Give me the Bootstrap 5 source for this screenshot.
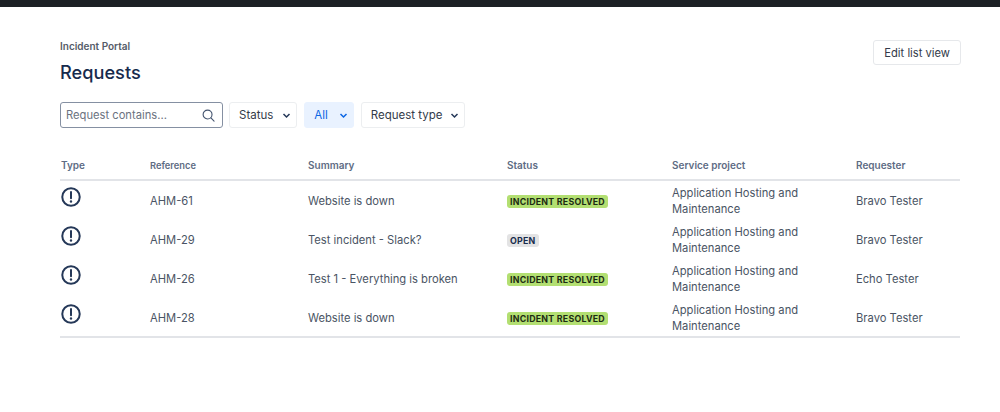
<!DOCTYPE html>
<html lang="en">
<head>
<meta charset="utf-8">
<title>Requests</title>
<link href="https://cdn.jsdelivr.net/npm/bootstrap@5.3.0/dist/css/bootstrap.min.css" rel="stylesheet">
<style>
body{font-family:Inter,"Liberation Sans",sans-serif;background:#fff;color:#4a5464;overflow:hidden;height:412px}
.top-strip{height:7px;background:#1d2125}
.portal-wrap{padding:33px 39px 0 60px}
.crumb{font-size:10px;line-height:13px;font-weight:600;color:#555c68}
.page-title{font-size:18.2px;line-height:24px;font-weight:500;color:#172b4d;margin:7px 0 0}
.edit-btn{height:25px;padding:1px 10px 0;font-size:11.2px;line-height:22px;color:#333b4a;background:#fff;border:1px solid #e6e8eb;border-radius:3px}
.filters{margin-top:18px}
.search-box{width:163px;height:26px;border:1px solid #8590a2;border-radius:3px;padding:1px 7px 0 5px;font-size:11.2px;color:#6b7280;margin-right:6px}
.filter-btn{height:26px;font-size:11.5px;color:#333b4a;background:#fff;border:1px solid #eceef0;border-radius:3px;padding:1px 5px 0 9px;gap:9px;margin-right:7px}
.filter-on{background:#e9f2ff;border-color:#e9f2ff;color:#0c66e4;gap:11px}
.filter-wide{gap:7px}
.req-table{table-layout:fixed;width:900px;margin:27px 0 0;font-size:11.2px;color:#4a5464}
.req-table th{height:25px;padding:0 0 3px;font-size:10px;font-weight:600;color:#5e6c84;vertical-align:middle;border-bottom:2px solid #e2e4e8;background:transparent}
.req-table td{height:39.25px;padding:2px 0 0;vertical-align:middle;line-height:16px;border:0;color:#4a5464;background:transparent}
.req-table tbody tr:last-child td{border-bottom:2px solid #e2e4e8}
.req-table th:first-child{padding-left:1px}
.type-icon{display:block;margin:-8px 0 0 1px}
.pill{display:inline-block;height:13px;line-height:13px;padding:0 3px;margin-left:1px;border-radius:3px;font-size:8.8px;font-weight:700;letter-spacing:.25px;color:#172b4d}
.pill-ok{background:#b3df72;color:#1c2b12}
.pill-open{background:#e3e3e4}
.ref-head{font-size:9.3px!important}
.status-head,.proj-cell{padding-left:1px!important}
</style>
</head>
<body>
<div class="top-strip"></div>
<main class="portal-wrap">
  <div class="d-flex justify-content-between align-items-start">
    <div>
      <div class="crumb">Incident Portal</div>
      <h1 class="page-title">Requests</h1>
    </div>
    <button type="button" class="edit-btn">Edit list view</button>
  </div>
  <div class="d-flex filters">
    <div class="search-box d-flex align-items-center justify-content-between">
      <span>Request contains...</span>
      <svg width="13" height="13" viewBox="0 0 14 14" fill="none" stroke="#44546f" stroke-width="1.2"><circle cx="6" cy="6" r="4.8"/><path d="M9.6 9.6 13 13" stroke-linecap="round"/></svg>
    </div>
    <div class="filter-btn d-flex align-items-center"><span>Status</span>
      <svg width="9" height="9" viewBox="0 0 9 9" fill="none" stroke="#253858" stroke-width="1.5"><path d="M1.5 3 4.5 6 7.5 3"/></svg></div>
    <div class="filter-btn filter-on d-flex align-items-center"><span>All</span>
      <svg width="9" height="9" viewBox="0 0 9 9" fill="none" stroke="#0c66e4" stroke-width="1.5"><path d="M1.5 3 4.5 6 7.5 3"/></svg></div>
    <div class="filter-btn filter-wide d-flex align-items-center"><span>Request type</span>
      <svg width="9" height="9" viewBox="0 0 9 9" fill="none" stroke="#253858" stroke-width="1.5"><path d="M1.5 3 4.5 6 7.5 3"/></svg></div>
  </div>
  <table class="table req-table">
    <colgroup><col style="width:90px"><col style="width:158px"><col style="width:198px"><col style="width:165px"><col style="width:185px"><col style="width:104px"></colgroup>
    <thead><tr><th>Type</th><th class="ref-head">Reference</th><th>Summary</th><th class="status-head">Status</th><th class="status-head">Service project</th><th>Requester</th></tr></thead>
    <tbody>
      <tr><td><svg class="type-icon" width="20" height="20" viewBox="0 0 22 22" fill="none"><circle cx="11" cy="11" r="9.6" stroke="#253858" stroke-width="2.2"/><path d="M11 5.6v6.8" stroke="#253858" stroke-width="2.2" stroke-linecap="round"/><circle cx="11" cy="16" r="1.3" fill="#253858"/></svg></td><td>AHM-61</td><td>Website is down</td><td><span class="pill pill-ok">INCIDENT RESOLVED</span></td><td class="proj-cell">Application Hosting and Maintenance</td><td>Bravo Tester</td></tr>
      <tr><td><svg class="type-icon" width="20" height="20" viewBox="0 0 22 22" fill="none"><circle cx="11" cy="11" r="9.6" stroke="#253858" stroke-width="2.2"/><path d="M11 5.6v6.8" stroke="#253858" stroke-width="2.2" stroke-linecap="round"/><circle cx="11" cy="16" r="1.3" fill="#253858"/></svg></td><td>AHM-29</td><td>Test incident - Slack?</td><td><span class="pill pill-open">OPEN</span></td><td class="proj-cell">Application Hosting and Maintenance</td><td>Bravo Tester</td></tr>
      <tr><td><svg class="type-icon" width="20" height="20" viewBox="0 0 22 22" fill="none"><circle cx="11" cy="11" r="9.6" stroke="#253858" stroke-width="2.2"/><path d="M11 5.6v6.8" stroke="#253858" stroke-width="2.2" stroke-linecap="round"/><circle cx="11" cy="16" r="1.3" fill="#253858"/></svg></td><td>AHM-26</td><td>Test 1 - Everything is broken</td><td><span class="pill pill-ok">INCIDENT RESOLVED</span></td><td class="proj-cell">Application Hosting and Maintenance</td><td>Echo Tester</td></tr>
      <tr><td><svg class="type-icon" width="20" height="20" viewBox="0 0 22 22" fill="none"><circle cx="11" cy="11" r="9.6" stroke="#253858" stroke-width="2.2"/><path d="M11 5.6v6.8" stroke="#253858" stroke-width="2.2" stroke-linecap="round"/><circle cx="11" cy="16" r="1.3" fill="#253858"/></svg></td><td>AHM-28</td><td>Website is down</td><td><span class="pill pill-ok">INCIDENT RESOLVED</span></td><td class="proj-cell">Application Hosting and Maintenance</td><td>Bravo Tester</td></tr>
    </tbody>
  </table>
</main>
</body>
</html>
